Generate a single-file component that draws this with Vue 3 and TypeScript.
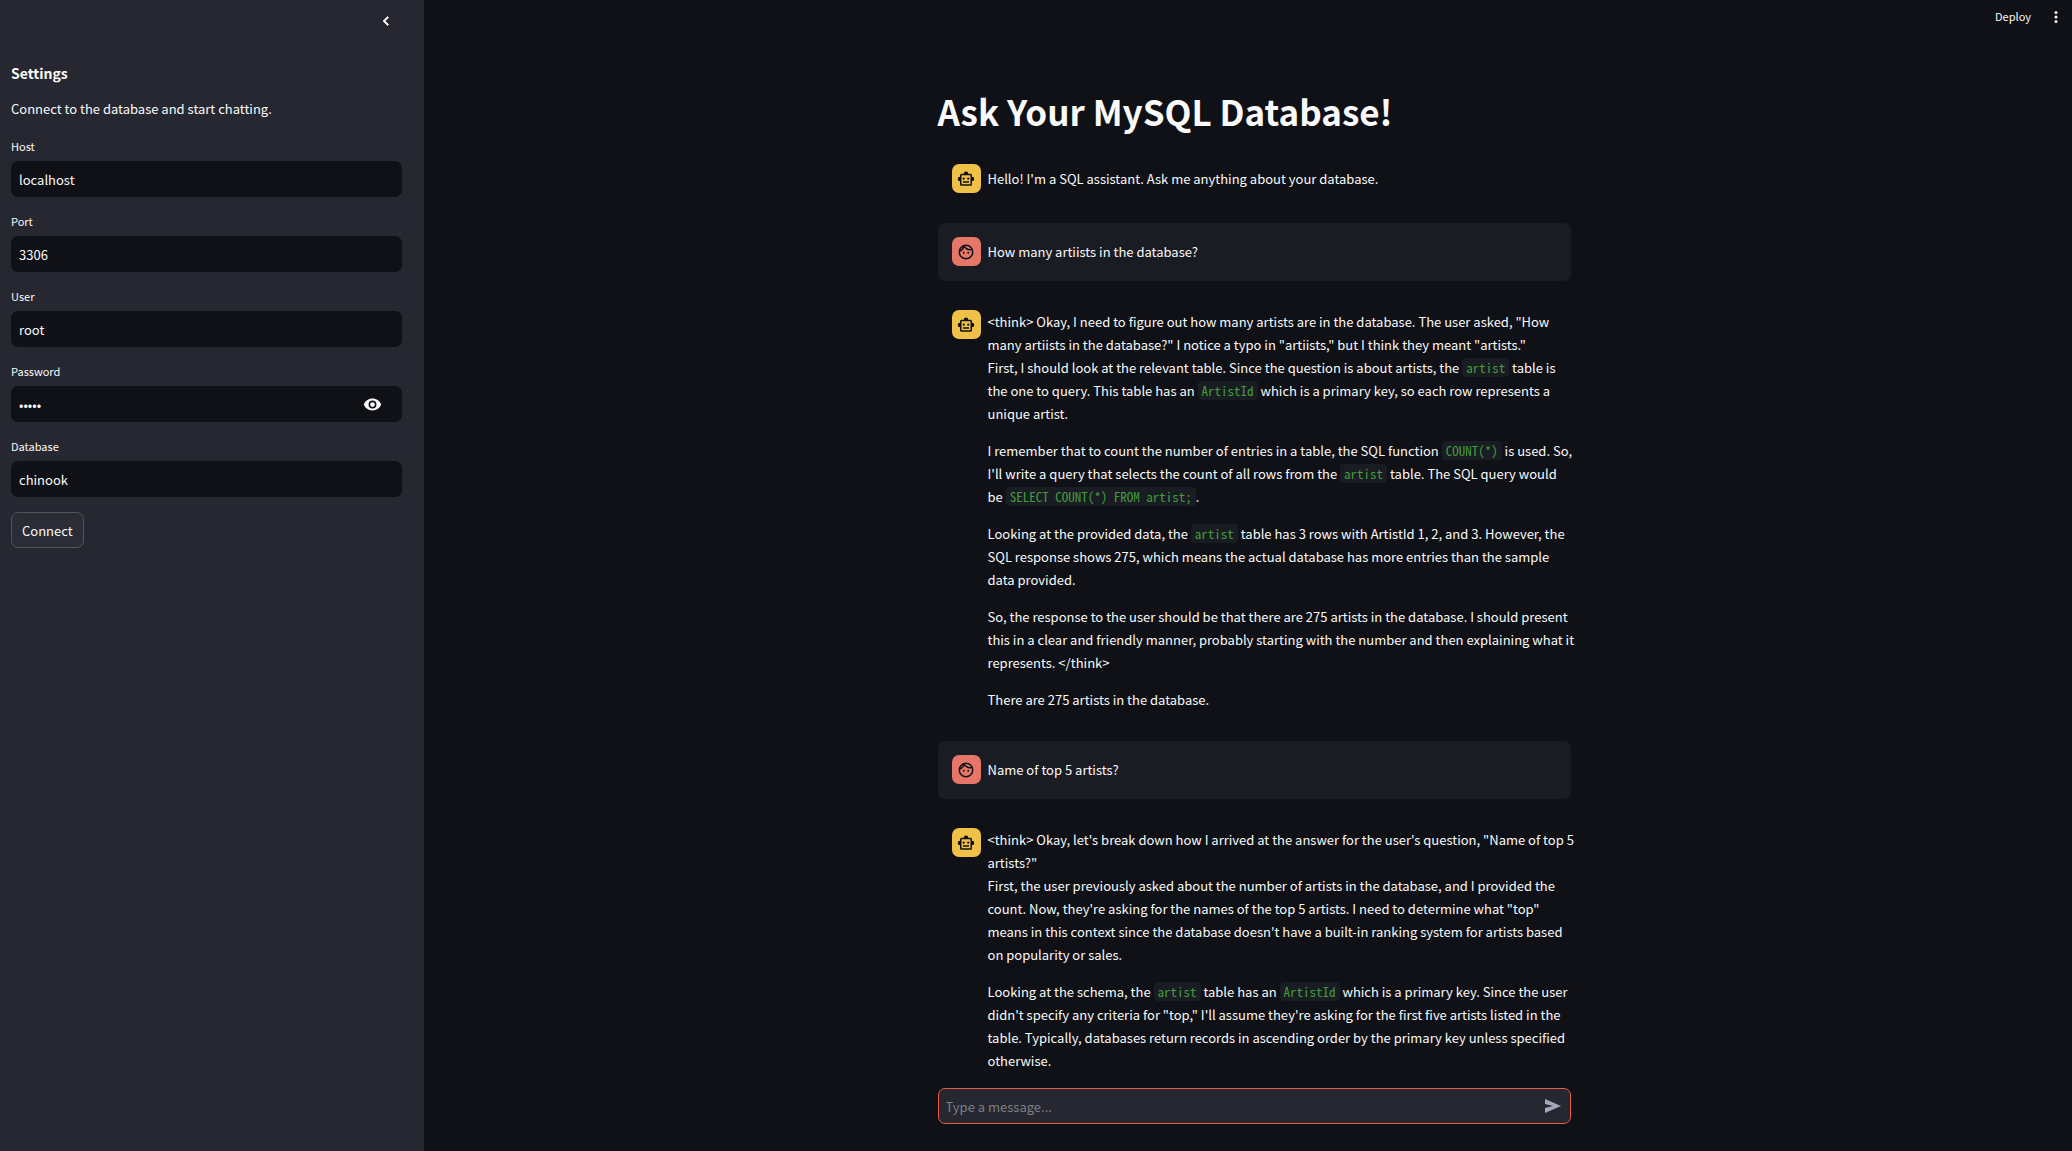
<script setup lang="ts">
import { ref } from 'vue'

type Part = string | { code: string } | { br: true }
interface Message {
  role: 'user' | 'assistant'
  paragraphs: Part[][]
}
interface Field {
  id: string
  label: string
  type: 'text' | 'password'
  value: string
}

const code = (text: string): Part => ({ code: text })
const br: Part = { br: true }

const fields = ref<Field[]>([
  { id: 'host', label: 'Host', type: 'text', value: 'localhost' },
  { id: 'port', label: 'Port', type: 'text', value: '3306' },
  { id: 'user', label: 'User', type: 'text', value: 'root' },
  { id: 'password', label: 'Password', type: 'password', value: 'admin' },
  { id: 'database', label: 'Database', type: 'text', value: 'chinook' },
])

const showPassword = ref(false)
const draft = ref('')

const messages = ref<Message[]>([
  {
    role: 'assistant',
    paragraphs: [["Hello! I'm a SQL assistant. Ask me anything about your database."]],
  },
  { role: 'user', paragraphs: [['How many artiists in the database?']] },
  {
    role: 'assistant',
    paragraphs: [
      [
        '<think> Okay, I need to figure out how many artists are in the database. The user asked, "How many artiists in the database?" I notice a typo in "artiists," but I think they meant "artists."',
        br,
        'First, I should look at the relevant table. Since the question is about artists, the ',
        code('artist'),
        ' table is the\u00a0one to query. This table has an ',
        code('ArtistId'),
        ' which is a primary key, so each row represents a unique\u00a0artist.',
      ],
      [
        'I remember that to count the number of entries in a table, the SQL function ',
        code('COUNT(*)'),
        " is used. So, I'll write a query that selects the count of all rows from the ",
        code('artist'),
        ' table. The SQL query would be\u00a0',
        code('SELECT COUNT(*) FROM artist;'),
        '.',
      ],
      [
        'Looking at the provided data, the ',
        code('artist'),
        ' table has 3 rows with ArtistId 1, 2, and 3. However, the SQL response shows 275, which means the actual database has more entries than the sample data provided.',
      ],
      [
        'So, the response to the user should be that there are 275 artists in the database. I should present this in a clear and friendly manner, probably starting with the number and then explaining what it represents. </think>',
      ],
      ['There are 275 artists in the database.'],
    ],
  },
  { role: 'user', paragraphs: [['Name of top 5 artists?']] },
  {
    role: 'assistant',
    paragraphs: [
      [
        '<think> Okay, let\'s break down how I arrived at the answer for the user\'s question, "Name of top 5 artists?"',
        br,
        "First, the user previously asked about the number of artists in the database, and I provided the count. Now, they're asking for the names of the top 5 artists. I need to determine what \"top\" means in this context since the database doesn't have a built-in ranking system for artists based on popularity or sales.",
      ],
      [
        'Looking at the schema, the ',
        code('artist'),
        ' table has an ',
        code('ArtistId'),
        " which is a primary key. Since the user didn't specify any criteria for \"top,\" I'll assume they're asking for the first five artists listed in the table. Typically, databases return records in ascending order by the primary key unless specified otherwise.",
      ],
    ],
  },
])

function send() {
  const text = draft.value.trim()
  if (!text) return
  messages.value.push({ role: 'user', paragraphs: [[text]] })
  draft.value = ''
}
</script>

<template>
  <div class="app">
    <aside class="sidebar">
      <div class="sidebar-top">
        <button class="icon-button" type="button" aria-label="Collapse sidebar">
          <svg width="18" height="18" viewBox="0 0 24 24" fill="currentColor">
            <path d="M15.4 7.4 14 6l-6 6 6 6 1.4-1.4L10.8 12z" stroke="currentColor" />
          </svg>
        </button>
      </div>
      <h2 class="settings-title">Settings</h2>
      <p class="settings-text">Connect to the database and start chatting.</p>
      <form class="settings-form" @submit.prevent>
        <div v-for="field in fields" :key="field.id" class="field">
          <label :for="field.id">{{ field.label }}</label>
          <div class="field-box">
            <input
              :id="field.id"
              v-model="field.value"
              :type="field.type === 'password' && !showPassword ? 'password' : 'text'"
              autocomplete="off"
            />
            <button
              v-if="field.type === 'password'"
              class="icon-button reveal"
              type="button"
              aria-label="Show password"
              @click="showPassword = !showPassword"
            >
              <svg width="19" height="19" viewBox="0 0 24 24" fill="currentColor">
                <path
                  d="M12 4.5C7 4.5 2.7 7.6 1 12c1.7 4.4 6 7.5 11 7.5s9.3-3.1 11-7.5c-1.7-4.4-6-7.5-11-7.5zM12 17a5 5 0 1 1 0-10 5 5 0 0 1 0 10zm0-8a3 3 0 1 0 0 6 3 3 0 0 0 0-6z"
                />
              </svg>
            </button>
          </div>
        </div>
        <button class="connect" type="submit">Connect</button>
      </form>
    </aside>

    <div class="main">
      <header class="toolbar">
        <button class="deploy" type="button">Deploy</button>
        <button class="icon-button" type="button" aria-label="Main menu">
          <svg width="18" height="18" viewBox="0 0 24 24" fill="currentColor">
            <circle cx="12" cy="6" r="2" />
            <circle cx="12" cy="12" r="2" />
            <circle cx="12" cy="18" r="2" />
          </svg>
        </button>
      </header>

      <main class="chat">
        <div class="column">
          <h1>Ask Your MySQL Database!</h1>
          <article v-for="(message, i) in messages" :key="i" class="message" :class="message.role">
            <div class="avatar">
              <svg v-if="message.role === 'assistant'" width="18" height="18" viewBox="0 0 24 24" fill="currentColor">
                <path
                  fill-rule="evenodd"
                  d="M20 9V7a2 2 0 0 0-2-2h-3a3 3 0 0 0-6 0H6a2 2 0 0 0-2 2v2a3 3 0 0 0 0 6v4a2 2 0 0 0 2 2h12a2 2 0 0 0 2-2v-4a3 3 0 0 0 0-6zm-2 10H6V7h12v12zM9 13a1.5 1.5 0 1 1 0-3 1.5 1.5 0 0 1 0 3zm6 0a1.5 1.5 0 1 1 0-3 1.5 1.5 0 0 1 0 3zm-7 2h8v2H8v-2z"
                />
              </svg>
              <svg v-else width="18" height="18" viewBox="0 0 24 24" fill="currentColor">
                <path
                  d="M10.25 13a1.25 1.25 0 1 1-2.5 0 1.25 1.25 0 0 1 2.5 0zM15 11.750a1.250 1.250 0 1 0 0 2.500 1.250 1.250 0 0 0 0-2.500zM22 12a10 10 0 1 1-20 0 10 10 0 0 1 20 0zM10.660 4.120C12.060 6.440 14.600 8 17.500 8c.46 0 .91-.05 1.340-.12C17.440 5.560 14.900 4 12 4c-.46 0-.91.05-1.340.12zM4.420 9.470a8.050 8.050 0 0 0 3.660-4.440 8.040 8.040 0 0 0-3.660 4.440zM20 12c0-.78-.12-1.530-.33-2.240-.7.15-1.420.24-2.170.24a9.960 9.960 0 0 1-7.760-3.690A10.020 10.020 0 0 1 4 11.860c.01.040 0 .09 0 .14a8 8 0 1 0 16 0z"
                />
              </svg>
            </div>
            <div class="content">
              <p v-for="(paragraph, j) in message.paragraphs" :key="j">
                <template v-for="(part, k) in paragraph" :key="k">
                  <template v-if="typeof part === 'string'">{{ part }}</template>
                  <code v-else-if="'code' in part">{{ part.code }}</code>
                  <br v-else />
                </template>
              </p>
            </div>
          </article>
        </div>
      </main>

      <footer class="bottom">
        <form class="composer" @submit.prevent="send">
          <input v-model="draft" type="text" placeholder="Type a message..." aria-label="Type a message" />
          <button class="icon-button send" type="submit" aria-label="Send message">
            <svg width="18" height="18" viewBox="0 0 18 18" fill="currentColor">
              <path d="M1 2 17 9 1 16V11L9 9 1 7z" />
            </svg>
          </button>
        </form>
      </footer>
    </div>
  </div>
</template>

<style>
body {
  background: #0f1116;
}
</style>

<style scoped>
.app {
  display: flex;
  height: 100vh;
  overflow: hidden;
  background: #0f1116;
  color: #fafafa;
  font-family: 'Noto Sans CJK JP', 'Noto Sans', sans-serif;
  font-size: 13px;
  line-height: 23px;
}

h1,
h2,
p {
  margin: 0;
}

button,
input {
  font: inherit;
  color: inherit;
}

.icon-button {
  display: flex;
  align-items: center;
  justify-content: center;
  padding: 0;
  border: 0;
  background: none;
  cursor: pointer;
}

.sidebar {
  flex: none;
  box-sizing: border-box;
  width: 424px;
  padding: 0 22px 0 11px;
  background: #262730;
}

.sidebar-top {
  display: flex;
  justify-content: flex-end;
  padding: 12px 7px 0 0;
  height: 50px;
}

.sidebar-top .icon-button {
  height: 18px;
}

.settings-title {
  font-size: 14px;
  font-weight: 700;
  line-height: 23px;
}

.settings-text {
  margin-top: 12px;
}

.settings-form {
  display: flex;
  flex-direction: column;
  align-items: flex-start;
  gap: 15px;
  margin-top: 16px;
}

.field {
  display: flex;
  flex-direction: column;
  align-self: stretch;
}

.field label {
  height: 24px;
  font-size: 11px;
  line-height: 18px;
}

.field-box {
  display: flex;
  align-items: center;
  box-sizing: border-box;
  height: 36px;
  border-radius: 7px;
  background: #0f1116;
}

.field-box input {
  flex: 1;
  min-width: 0;
  height: 23px;
  padding: 0 8px;
  border: 0;
  outline: 0;
  background: none;
}

.reveal {
  margin-right: 20px;
}

.connect {
  height: 36px;
  padding: 0 10px;
  border: 1px solid #52535b;
  border-radius: 7px;
  background: #2b2c36;
  cursor: pointer;
}

.settings-form {
  margin-top: 17px;
}

.main {
  display: flex;
  flex: 1;
  flex-direction: column;
  min-width: 0;
}

.toolbar {
  display: flex;
  flex: none;
  align-items: center;
  justify-content: flex-end;
  gap: 16px;
  height: 33px;
  padding-right: 7px;
}

.deploy {
  padding: 0;
  border: 0;
  background: none;
  font-size: 11px;
  cursor: pointer;
}

.chat {
  flex: 1;
  min-height: 0;
  padding-left: 12px;
  overflow: hidden;
}

.column,
.composer {
  box-sizing: border-box;
  width: 100%;
  max-width: 633px;
  margin: 0 auto;
}

.column {
  display: flex;
  flex-direction: column;
  gap: 15px;
  padding-top: 54px;
}

h1 {
  font-size: 35px;
  font-weight: 700;
  line-height: 48px;
}

.message {
  display: flex;
  gap: 7px;
  padding: 14px 0 15px 14px;
  border-radius: 7px;
}

.message.user {
  background: #1a1c24;
}

.avatar {
  display: flex;
  flex: none;
  align-items: center;
  justify-content: center;
  width: 29px;
  height: 29px;
  border-radius: 7px;
  background: #f0c148;
  color: #0f1116;
}

.user .avatar {
  background: #e67768;
}

.content {
  display: flex;
  flex: 1;
  flex-direction: column;
  gap: 14px;
  min-width: 0;
  margin: auto -8px auto 0;
}

code {
  padding: 0 4px;
  border-radius: 4px;
  background: #1a1c24;
  color: #419e3b;
  font-family: 'Noto Sans Mono CJK JP', 'Liberation Mono', monospace;
  font-size: 13px;
  line-height: 16px;
}

.bottom {
  flex: none;
  padding: 14px 0 27px 12px;
}

.composer {
  display: flex;
  align-items: center;
  height: 36px;
  padding-right: 8px;
  border: 1px solid #eb5a41;
  border-radius: 7px;
  background: #262730;
}

.composer input {
  flex: 1;
  min-width: 0;
  padding: 0 7px;
  border: 0;
  outline: 0;
  background: none;
}

.composer input::placeholder {
  color: #7e7f85;
  opacity: 1;
}

.send {
  color: #a3a8b8;
}
</style>
